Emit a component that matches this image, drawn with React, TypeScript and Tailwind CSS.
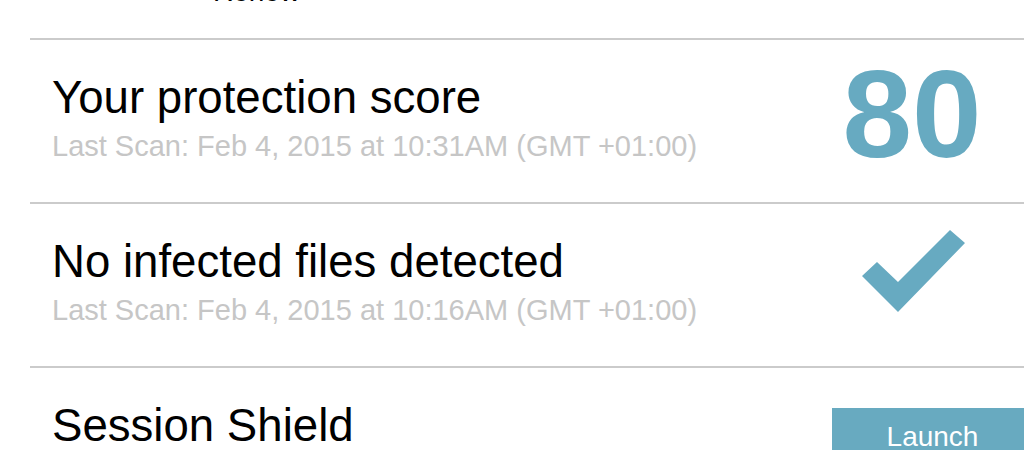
import { ReactNode } from 'react';

const FONT = { fontFamily: '"Liberation Sans", Arial, sans-serif' };

function Row({ title, sub, right, last }: { title: string; sub?: string; right: ReactNode; last?: boolean }) {
  return (
    <div className={`flex h-[162px] ${last ? '' : 'border-b-2 border-[#cbcbcb]'} box-content`}>
      <div className="flex-1 pl-[22px] pt-[35px]">
        <div className="text-[45.6px] leading-[45px] text-black">{title}</div>
        {sub && <div className="mt-[12px] text-[29px] leading-[29px] text-[#c6c6c6]">{sub}</div>}
      </div>
      <div className="w-[202px] shrink-0">{right}</div>
    </div>
  );
}

export default function App() {
  return (
    <div className="w-[1024px] h-[450px] overflow-hidden bg-white" style={FONT}>
      <div className="ml-[30px] w-[1004px]">
        <div className="h-[38px] border-b-2 border-[#cbcbcb] box-content overflow-hidden">
          <div className="pl-[183px] -mt-[22px] text-[28px] leading-[28px] text-black">Renew</div>
        </div>

        <Row
          title="Your protection score"
          sub="Last Scan: Feb 4, 2015 at 10:31AM (GMT +01:00)"
          right={
            <div className="w-[160px] pt-[11px] text-center text-[125px] leading-[125px] font-bold text-[#67aac1]">80</div>
          }
        />

        <Row
          title="No infected files detected"
          sub="Last Scan: Feb 4, 2015 at 10:16AM (GMT +01:00)"
          right={
            <svg viewBox="0 0 104 83" className="ml-[30px] mt-[26px] w-[104px] h-[83px]">
              <polygon points="15,32 36,52 88,0 103,13 36,82 0,46" fill="#67aac1" />
            </svg>
          }
        />

        <Row
          title="Session Shield"
          last
          right={
            <button className="mt-[40px] w-[201px] h-[60px] bg-[#68aac0] pt-[15px] flex items-start justify-center text-[28px] leading-[28px] text-white" style={FONT}>
              <span>Launch</span>
            </button>
          }
        />
      </div>
    </div>
  );
}
